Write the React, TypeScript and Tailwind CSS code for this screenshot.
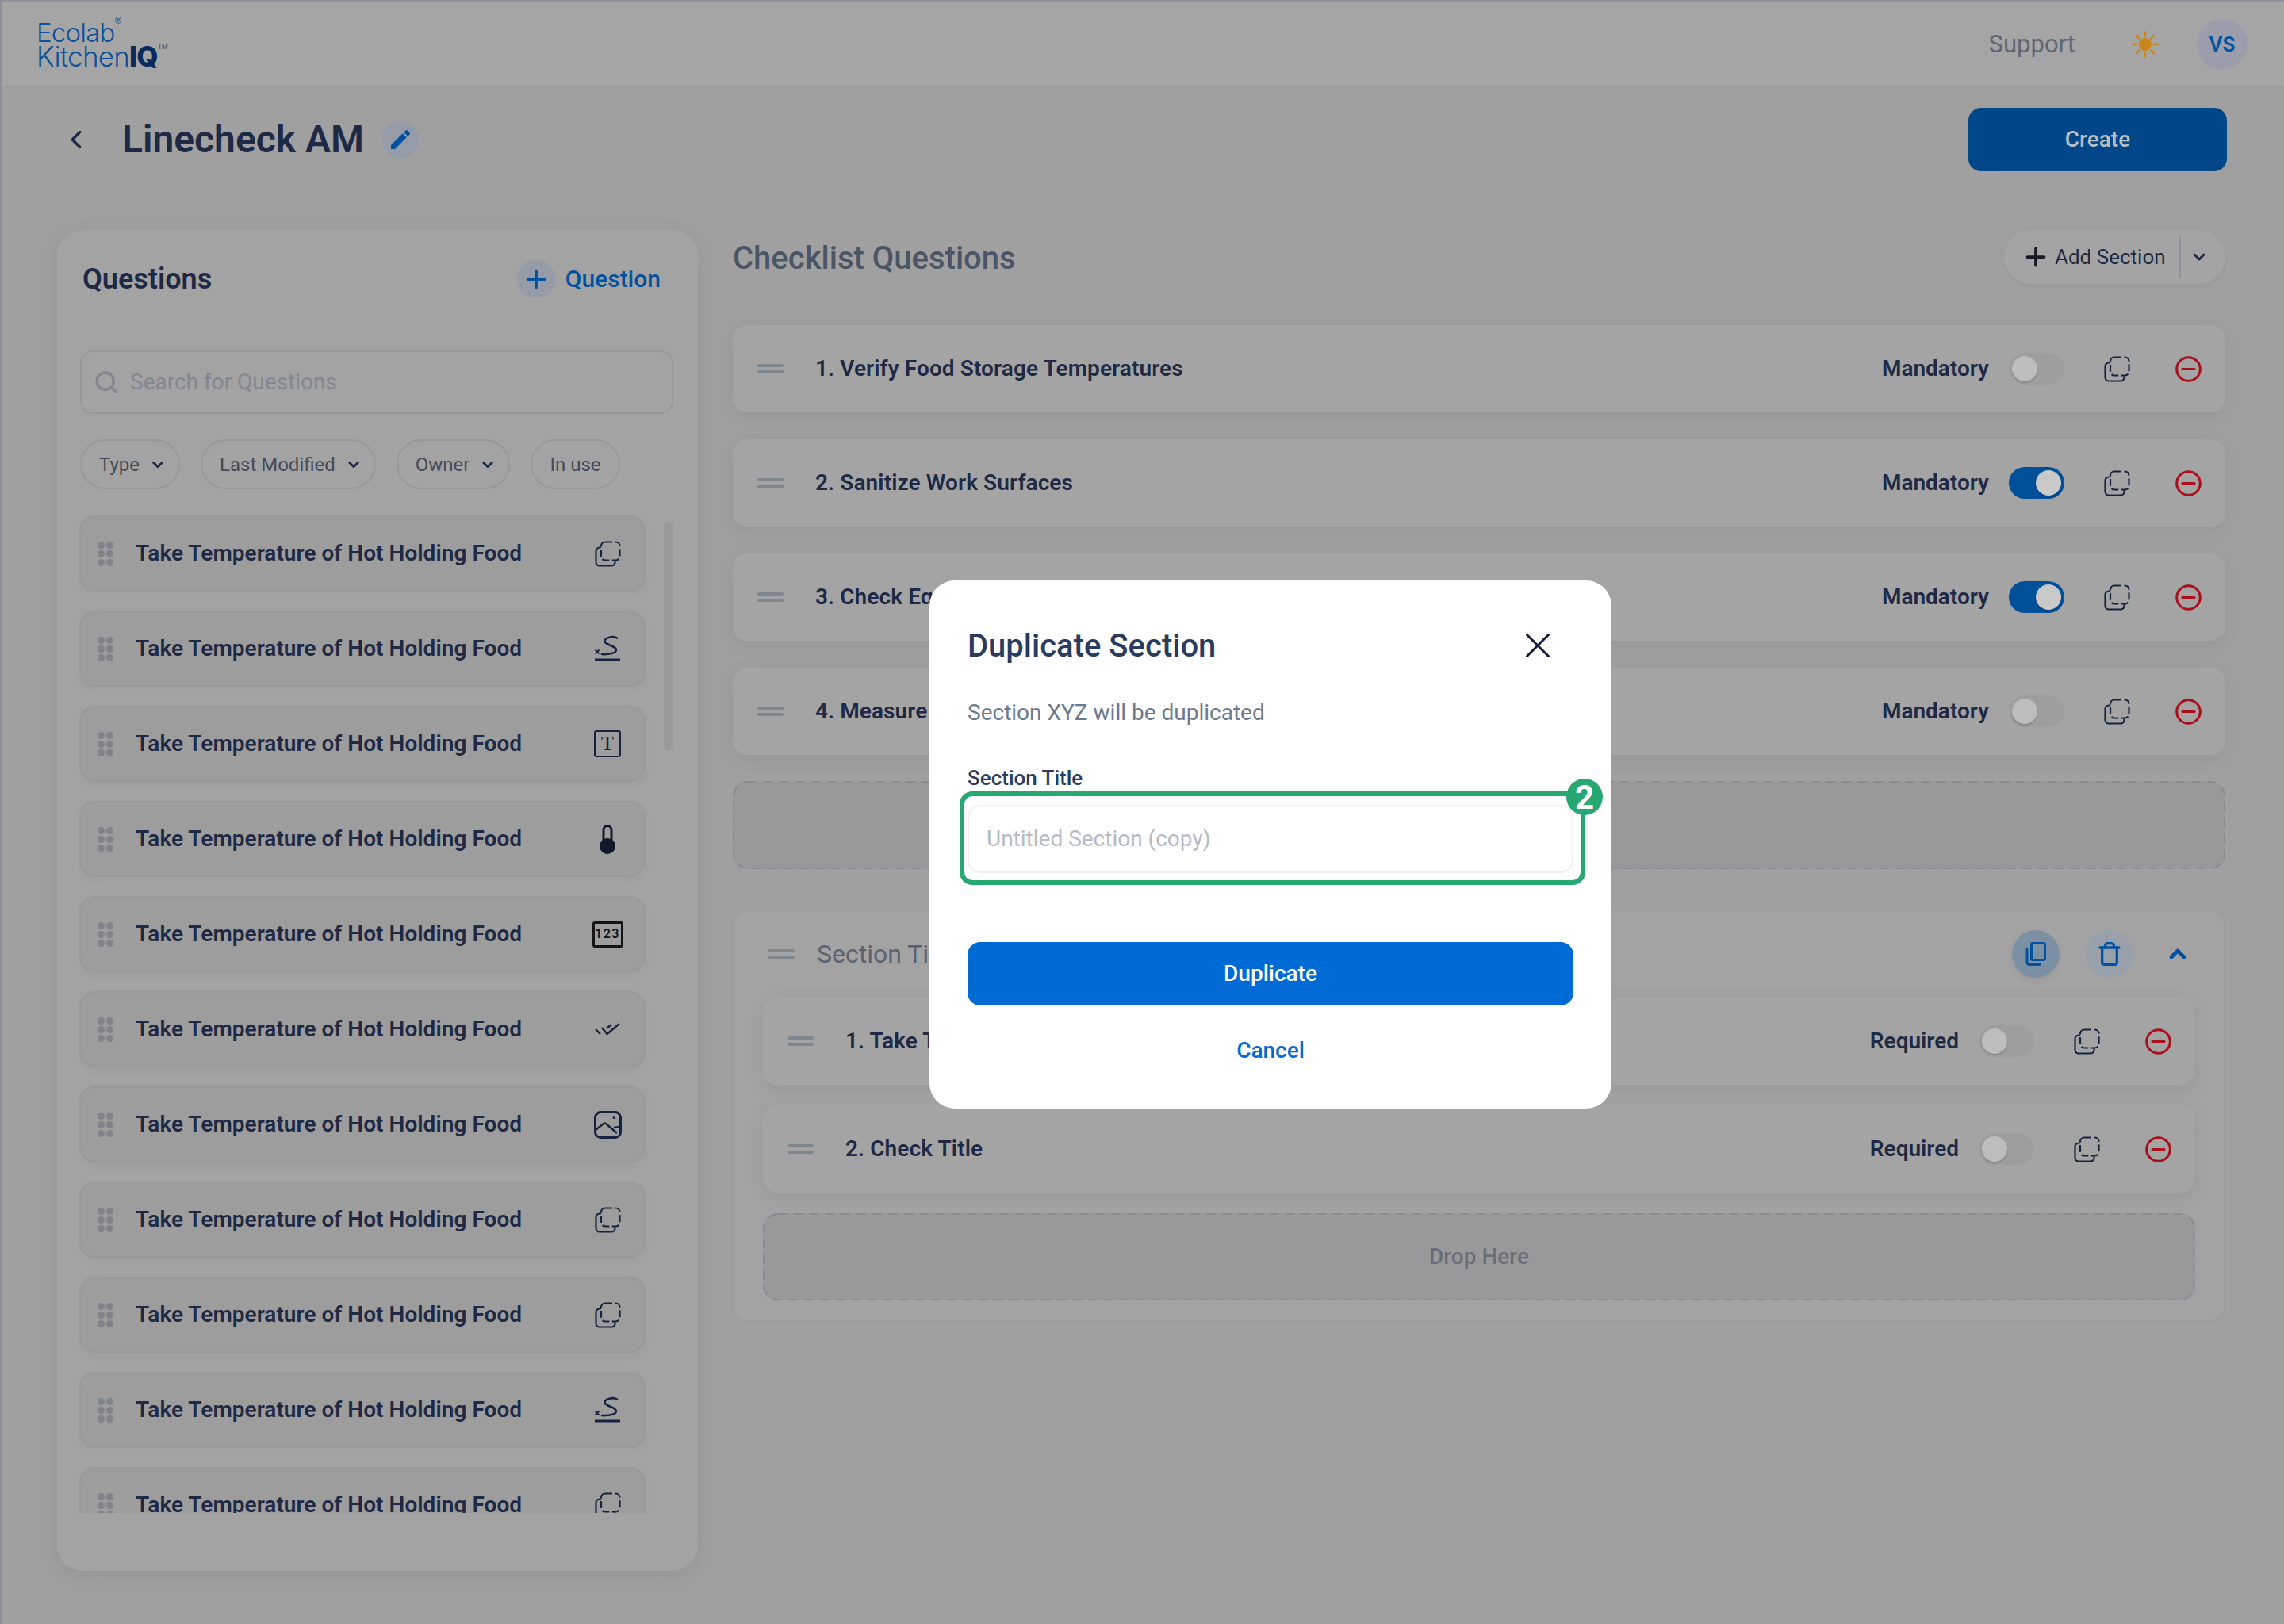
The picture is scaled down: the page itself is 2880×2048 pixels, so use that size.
import { ChevronDown, ChevronLeft, ChevronUp, Plus, Search, Trash, X } from "lucide-react";
import { MdEdit } from "react-icons/md";

const navy = "text-[#1e2a45]";

function DashedCopy({ className }: { className?: string }) {
  return (
    <svg viewBox="0 0 33 33" fill="none" stroke="currentColor" strokeWidth="2.2" className={className}>
      <rect x="8" y="1.500" width="23.500" height="23" rx="5" strokeDasharray="9 3.500" />
      <path d="M7 8.500H6a4.500 4.500 0 0 0-4.500 4.500V27a4.500 4.500 0 0 0 4.500 4.500h15a4.500 4.500 0 0 0 4.500-4.500v-1" strokeLinecap="round" />
    </svg>
  );
}

function MinusCircle() {
  return (
    <svg viewBox="0 0 33 33" fill="none" stroke="#a80f1b" className="w-[33px] h-[33px]">
      <circle cx="16.500" cy="16.500" r="14.800" strokeWidth="3" />
      <path d="M9 16.500h15" strokeWidth="3.200" strokeLinecap="round" />
    </svg>
  );
}

function SignatureIcon() {
  return (
    <svg viewBox="0 0 34 34" fill="none" stroke="#14233f" className="w-[34px] h-[34px]">
      <path d="M29 3.500C24 .500 13 3 13.500 8c.5 4.500 15 5.500 14.500 11-.3 3.500-9 5.500-18 5" strokeWidth="2.600" strokeLinecap="round" />
      <path d="M1.500 18.500l5 5M6.500 18.500l-5 5" strokeWidth="1.800" />
      <path d="M1 31h32" strokeWidth="3" />
    </svg>
  );
}

function TextIcon() {
  return (
    <div className="w-[34px] h-[34px] border-2 border-[#14233f] rounded-[3px] flex items-center justify-center text-[#14233f] text-[26px] leading-none font-['Liberation_Serif',serif]">
      T
    </div>
  );
}

function ThermometerIcon() {
  return (
    <svg viewBox="0 0 22 37" className="w-[22px] h-[37px]">
      <path d="M6 22V6.500a5 5 0 0 1 10 0V22" fill="none" stroke="#111827" strokeWidth="3" />
      <circle cx="11" cy="27" r="10" fill="#111827" />
      <path d="M5 22h12v-2H5z" fill="#111827" />
    </svg>
  );
}

function NumberIcon() {
  return (
    <div className="w-[39px] h-[33px] border-[3px] border-[#141414] rounded-[3px] flex items-center justify-center text-[#141414] text-[16px] leading-none font-semibold tracking-[1.500px]">
      123
    </div>
  );
}

function CheckIcon() {
  return (
    <svg viewBox="0 0 32 18" fill="none" stroke="#14233f" strokeWidth="2.400" className="w-[32px] h-[18px]">
      <path d="M1 9l6 6" />
      <path d="M9 7l6.500 8L31 2" />
      <path d="M15 8l6-5" />
    </svg>
  );
}

function ImageIcon() {
  return (
    <svg viewBox="0 0 35 35" fill="none" stroke="#14233f" className="w-[35px] h-[35px]">
      <rect x="1.500" y="1.500" width="32" height="32" rx="7" strokeWidth="3" />
      <path d="M2 24l10-8c1-.8 2-.8 3 0l14 12" strokeWidth="2.400" />
      <path d="M25 21l8-1" strokeWidth="2.400" />
      <circle cx="25" cy="8.500" r="1.500" fill="#14233f" stroke="none" />
    </svg>
  );
}

function SunIcon() {
  const rays = [0, 45, 90, 135, 180, 225, 270, 315];
  return (
    <svg viewBox="0 0 34 34" className="w-[34px] h-[34px]">
      <circle cx="17" cy="17" r="8" fill="#c8861a" />
      {rays.map((r) => (
        <path key={r} d="M17 1.500v5" stroke="#c8861a" strokeWidth="2.600" strokeLinecap="round" transform={`rotate(${r} 17 17)`} />
      ))}
    </svg>
  );
}

function StackedCopy() {
  return (
    <svg viewBox="0 0 26 30" fill="none" stroke="#0052a0" strokeWidth="3" className="w-[26px] h-[30px]">
      <rect x="7.500" y="1.500" width="17" height="21" rx="1.500" />
      <path d="M2 7v19a2.500 2.500 0 0 0 2.500 2.500H19" />
    </svg>
  );
}

function Toggle({ on }: { on?: boolean }) {
  return (
    <div className={`w-[70px] h-[40px] rounded-full flex items-center p-1 ${on ? "bg-[#004f99] justify-end" : "bg-[#9e9e9e] justify-start"}`}>
      <div className={`w-[32px] h-[32px] rounded-full shadow-[0_2px_2px_rgba(0,0,0,0.15)] ${on ? "bg-[#c9c9c9]" : "bg-[#bdbdbd]"}`} />
    </div>
  );
}

function DragLines() {
  return (
    <div className="flex flex-col gap-[4px] w-[33px] shrink-0">
      <div className="h-[4px] rounded-sm bg-[#7e868e]" />
      <div className="h-[4px] rounded-sm bg-[#7e868e]" />
    </div>
  );
}

function CheckRow({ title, label, on }: { title: string; label: string; on?: boolean }) {
  return (
    <div className="h-[110px] rounded-[18px] bg-[#a4a4a4] shadow-[0_6px_20px_rgba(60,70,70,0.1)] flex items-center pl-[31px] pr-[30px]">
      <DragLines />
      <div className={`ml-[40px] flex-1 text-[28px] font-semibold tracking-[0.1px] ${navy}`}>{title}</div>
      <div className={`text-[28px] font-semibold ${navy}`}>{label}</div>
      <div className="ml-[25px]">
        <Toggle on={on} />
      </div>
      <DashedCopy className="ml-[50px] w-[33px] h-[33px] text-[#14233f]" />
      <div className="ml-[57px] flex">
        <MinusCircle />
      </div>
    </div>
  );
}

function DropZone({ text, className }: { text?: string; className: string }) {
  return (
    <div className={`relative rounded-[18px] bg-[#99999c] flex items-center justify-center text-[28px] font-medium text-[#696e76] ${className}`}>
      <svg className="absolute inset-0 w-full h-full" fill="none">
        <rect x="1" y="1" rx="18" stroke="#868b92" strokeWidth="2" strokeDasharray="11 9" className="[width:calc(100%-2px)] [height:calc(100%-2px)]" />
      </svg>
      {text}
    </div>
  );
}

function Filter({ label, arrow = true }: { label: string; arrow?: boolean }) {
  return (
    <div className={`h-[63px] rounded-full border-2 border-[#989898] flex items-center gap-[12px] text-[24px] text-[#444b59] ${arrow ? "pl-[22px] pr-[15px]" : "px-[22px]"}`}>
      {label}
      {arrow && <ChevronDown className="w-[22px] h-[22px] text-[#1e2a45]" strokeWidth={3} />}
    </div>
  );
}

const questionIcons = [
  <DashedCopy className="w-[33px] h-[33px] text-[#14233f]" />,
  <SignatureIcon />,
  <TextIcon />,
  <ThermometerIcon />,
  <NumberIcon />,
  <CheckIcon />,
  <ImageIcon />,
  <DashedCopy className="w-[33px] h-[33px] text-[#14233f]" />,
  <DashedCopy className="w-[33px] h-[33px] text-[#14233f]" />,
  <SignatureIcon />,
  <DashedCopy className="w-[33px] h-[33px] text-[#14233f]" />,
];

function QuestionItem({ icon }: { icon: React.ReactNode }) {
  return (
    <div className="h-[96px] w-[714px] shrink-0 rounded-[20px] bg-[#9d9d9d] border-2 border-[#999999] shadow-[0_4px_12px_rgba(0,0,0,0.03)] flex items-center pl-[21px] pr-[26px]">
      <div className="grid grid-cols-2 gap-x-[2px] gap-y-[2px] w-[20px] shrink-0">
        {[0, 1, 2, 3, 4, 5].map((d) => (
          <div key={d} className="w-[9px] h-[9px] rounded-full bg-[#7f838a]" />
        ))}
      </div>
      <div className={`ml-[28px] flex-1 text-[28px] font-semibold tracking-[0.04px] ${navy}`}>Take Temperature of Hot Holding Food</div>
      <div className="w-[40px] flex justify-center">{icon}</div>
    </div>
  );
}

export default function App() {
  return (
    <div className="relative w-[2880px] h-[2048px] overflow-hidden bg-[#a0a0a0] border-t-2 border-l-2 border-[#8d909c] font-[Roboto,sans-serif]">
      {/* top bar */}
      <div className="h-[108px] pt-[2px] bg-[#a5a5a5] border-b-2 border-[#9b9b9b] flex items-center pl-[44px] pr-[46px]">
        <div className="font-[Inter,sans-serif] font-light leading-[32px] text-[#0d5299]">
          <div className="text-[33px] tracking-[-0.8px]">
            Ecolab<sup className="text-[14px] align-[14px] leading-none">®</sup>
          </div>
          <div className="-mt-[2px] text-[35px] tracking-[-0.8px]">
            Kitchen<span className="font-extrabold text-[#0a2a5c]">IQ</span>
            <sup className="text-[9px] align-[18px] leading-none text-[#0a2a5c]">TM</sup>
          </div>
        </div>
        <div className="ml-auto text-[31px] text-[#5f6673]">Support</div>
        <div className="ml-[71px] flex">
          <SunIcon />
        </div>
        <div className="ml-[48px] w-[64px] h-[64px] rounded-full bg-[#9c9dac] flex items-center justify-center text-[26px] font-semibold text-[#0054a3]">
          VS
        </div>
      </div>

      {/* title row */}
      <div className="pt-[26px] pl-[75px] pr-[72px] flex items-center">
        <ChevronLeft className="w-[38px] h-[38px] text-[#1e2a45]" strokeWidth={2.2} />
        <h1 className={`ml-[39px] text-[48px] font-semibold ${navy}`}>Linecheck AM</h1>
        <div className="ml-[22px] w-[48px] h-[48px] rounded-full bg-[#969ca7] flex items-center justify-center">
          <MdEdit className="w-[32px] h-[32px] text-[#0052a0]" />
        </div>
        <div className="ml-auto w-[326px] h-[80px] rounded-[16px] bg-[#00478a] flex items-center justify-center text-[28px] font-medium text-[#b9bdc2]">
          Create
        </div>
      </div>

      <div className="mt-[74px] pl-[70px] pr-[74px] flex gap-[44px] items-start">
        {/* questions panel */}
        <div className="w-[808px] h-[1691px] shrink-0 rounded-[32px] bg-[#a3a3a3] shadow-[0_6px_24px_rgba(50,60,70,0.12)] pt-[38px] pl-[29px] pr-[31px]">
          <div className="h-[48px] pl-[3px] pr-[16px] flex items-center">
            <div className={`text-[36px] font-semibold ${navy}`}>Questions</div>
            <div className="ml-auto w-[48px] h-[48px] rounded-full bg-[#969ca7] flex items-center justify-center">
              <Plus className="w-[36px] h-[36px] text-[#0052a0]" strokeWidth={2.5} />
            </div>
            <div className="ml-[13px] -mt-px text-[30px] font-medium text-[#0052a0]">Question</div>
          </div>
          <div className="mt-[66px] h-[80px] rounded-[16px] border-2 border-[#989898] flex items-center pl-[15px] gap-[14px] text-[28px] text-[#83878f]">
            <Search className="w-[32px] h-[32px]" strokeWidth={2.5} />
            Search for Questions
          </div>
          <div className="mt-[32px] flex gap-[26px]">
            <Filter label="Type" />
            <Filter label="Last Modified" />
            <Filter label="Owner" />
            <Filter label="In use" arrow={false} />
          </div>
          <div className="relative mt-[33px] -ml-px h-[1258px] overflow-hidden flex flex-col gap-[24px]">
            {questionIcons.map((icon, i) => (
              <QuestionItem key={i} icon={icon} />
            ))}
            <div className="absolute right-0 top-[8px] w-[12px] h-[289px] rounded-full bg-[#999999]" />
          </div>
        </div>

        {/* checklist */}
        <div className="flex-1">
          <div className="h-[68px] flex items-center justify-between">
            <h2 className="pt-[3px] text-[40px] font-medium text-[#4a5566]">Checklist Questions</h2>
            <div className="h-[68px] w-[279px] rounded-full bg-[#a4a4a4] shadow-[0_2px_6px_rgba(0,0,0,0.05)] flex items-center pl-[22px] text-[26px] text-[#1f2940]">
              <Plus className="w-[36px] h-[36px] text-[#161a22]" strokeWidth={2.5} />
              <span className="ml-[6px]">Add Section</span>
              <div className="ml-[17px] w-[2px] h-[54px] bg-[#8f9299]" />
              <ChevronDown className="ml-[11px] w-[24px] h-[24px] text-[#1e2a45]" strokeWidth={3} />
            </div>
          </div>

          <div className="mt-[52px] flex flex-col gap-[34px]">
            <CheckRow title="1. Verify Food Storage Temperatures" label="Mandatory" />
            <CheckRow title="2. Sanitize Work Surfaces" label="Mandatory" on />
            <CheckRow title="3. Check Equipment" label="Mandatory" on />
            <CheckRow title="4. Measure Oil" label="Mandatory" />
            <DropZone className="h-[111px] -mt-px" />
          </div>

          <div className="mt-[51px] rounded-[18px] bg-[#a3a3a3] border-2 border-[#9d9d9d] px-[36px] pt-[24px] pb-[25px]">
            <div className="h-[60px] pl-[7px] pr-[6px] flex items-center">
              <DragLines />
              <div className="ml-[28px] flex-1 text-[32px] text-[#5a6270]">Section Title</div>
              <div className="w-[60px] h-[60px] rounded-full bg-[#7b90a3] shadow-[0_4px_10px_rgba(0,0,0,0.06)] flex items-center justify-center">
                <StackedCopy />
              </div>
              <div className="ml-[33px] w-[60px] h-[60px] rounded-full bg-[#98a1ab] flex items-center justify-center">
                <Trash className="w-[32px] h-[32px] text-[#0052a0]" strokeWidth={2.5} />
              </div>
              <ChevronUp className="ml-[40px] w-[32px] h-[32px] text-[#0052a0]" strokeWidth={3.5} />
            </div>
            <div className="mt-[25px] flex flex-col gap-[26px]">
              <CheckRow title="1. Take Temperature" label="Required" />
              <CheckRow title="2. Check Title" label="Required" />
              <DropZone text="Drop Here" className="h-[110px]" />
            </div>
          </div>
        </div>
      </div>

      {/* duplicate dialog */}
      <div className="absolute left-[1170px] top-[730px] w-[860px] h-[666px] rounded-[32px] bg-white px-[48px] pt-[56px]">
        <div className="flex items-center justify-between h-[54px]">
          <h3 className="text-[40px] font-medium text-[#2a3b60]">Duplicate Section</h3>
          <X className="mr-[18px] -mt-[3px] w-[54px] h-[54px] text-[#101c3c]" strokeWidth={1.3} />
        </div>
        <p className="mt-[37px] text-[28px] leading-[40px] text-[#6b7a90]">Section XYZ will be duplicated</p>
        <label className="mt-[44px] block text-[26px] leading-[36px] font-medium text-[#2a3b60]">Section Title</label>
        <div className="relative mt-[16px]">
          <div className="h-[86px] rounded-[16px] border-2 border-[#f0f0f0] flex items-center pl-[22px] text-[28px] text-[#b4bac6]">
            Untitled Section (copy)
          </div>
          <div className="absolute -left-[10px] -top-[17px] -right-[15px] -bottom-[15px] rounded-[16px] border-[6px] border-[#25a871]" />
          <div className="absolute -right-[37px] -top-[33px] w-[46px] h-[46px] rounded-full bg-[#25a871] flex items-center justify-center text-[42px] font-bold text-white">
            2
          </div>
        </div>
        <div className="mt-[87px] h-[80px] rounded-[16px] bg-[#016bd5] flex items-center justify-center text-[28px] font-medium text-white">
          Duplicate
        </div>
        <div className="mt-[36px] text-center text-[28px] font-medium text-[#016bd5]">Cancel</div>
      </div>
    </div>
  );
}
